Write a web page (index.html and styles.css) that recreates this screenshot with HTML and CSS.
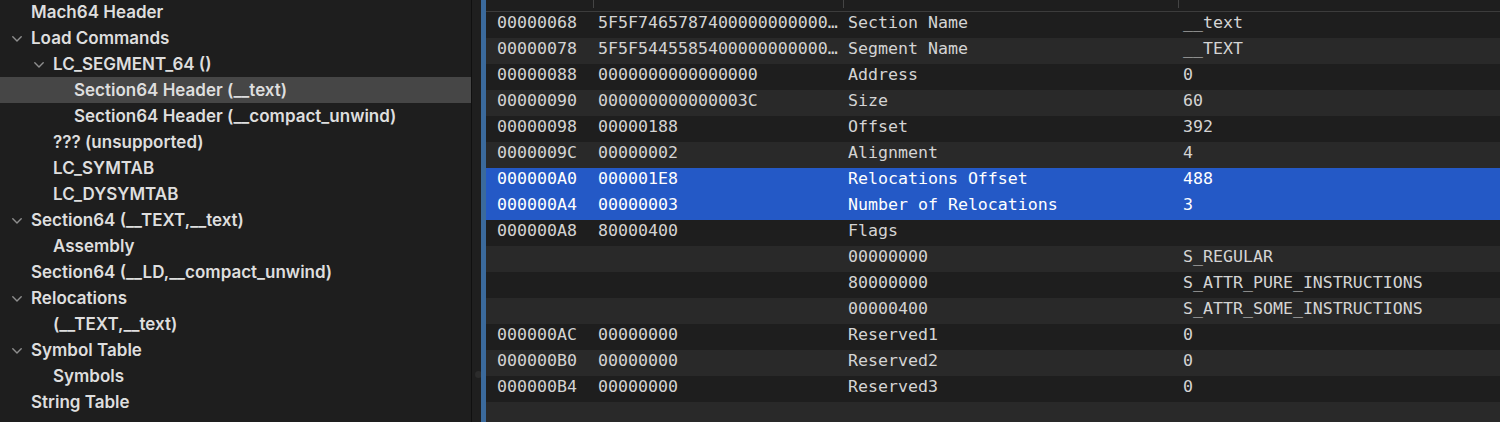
FILE: index.html
```html
<!DOCTYPE html>
<html>
<head>
<meta charset="utf-8">
<link rel="stylesheet" href="styles.css">
</head>
<body>
<div class="app">
  <div class="tree">
    <div class="node l0"><span class="label">Mach64 Header</span></div>
    <div class="node l0"><svg class="chev" viewBox="0 0 10 6"><polyline points="0.8,0.8 5,5 9.2,0.8"/></svg><span class="label">Load Commands</span></div>
    <div class="node l1"><svg class="chev" viewBox="0 0 10 6"><polyline points="0.8,0.8 5,5 9.2,0.8"/></svg><span class="label">LC_SEGMENT_64 ()</span></div>
    <div class="node l2 selected"><span class="label">Section64 Header (__text)</span></div>
    <div class="node l2"><span class="label">Section64 Header (__compact_unwind)</span></div>
    <div class="node l1"><span class="label">??? (unsupported)</span></div>
    <div class="node l1"><span class="label">LC_SYMTAB</span></div>
    <div class="node l1"><span class="label">LC_DYSYMTAB</span></div>
    <div class="node l0"><svg class="chev" viewBox="0 0 10 6"><polyline points="0.8,0.8 5,5 9.2,0.8"/></svg><span class="label">Section64 (__TEXT,__text)</span></div>
    <div class="node l1"><span class="label">Assembly</span></div>
    <div class="node l0"><span class="label">Section64 (__LD,__compact_unwind)</span></div>
    <div class="node l0"><svg class="chev" viewBox="0 0 10 6"><polyline points="0.8,0.8 5,5 9.2,0.8"/></svg><span class="label">Relocations</span></div>
    <div class="node l1"><span class="label">(__TEXT,__text)</span></div>
    <div class="node l0"><svg class="chev" viewBox="0 0 10 6"><polyline points="0.8,0.8 5,5 9.2,0.8"/></svg><span class="label">Symbol Table</span></div>
    <div class="node l1"><span class="label">Symbols</span></div>
    <div class="node l0"><span class="label">String Table</span></div>
  </div>
  <div class="splitter">
    <div class="knob"></div>
  </div>
  <div class="accent"></div>
  <div class="table">
    <div class="head">
      <div class="hc c1"></div>
      <div class="hc c2"></div>
      <div class="hc c3"></div>
      <div class="hc c4"></div>
    </div>
    <div class="row"><div class="c c1">00000068</div><div class="c c2">5F5F7465787400000000000…</div><div class="c c3">Section Name</div><div class="c c4">__text</div></div>
    <div class="row"><div class="c c1">00000078</div><div class="c c2">5F5F5445585400000000000…</div><div class="c c3">Segment Name</div><div class="c c4">__TEXT</div></div>
    <div class="row"><div class="c c1">00000088</div><div class="c c2">0000000000000000</div><div class="c c3">Address</div><div class="c c4">0</div></div>
    <div class="row"><div class="c c1">00000090</div><div class="c c2">000000000000003C</div><div class="c c3">Size</div><div class="c c4">60</div></div>
    <div class="row"><div class="c c1">00000098</div><div class="c c2">00000188</div><div class="c c3">Offset</div><div class="c c4">392</div></div>
    <div class="row"><div class="c c1">0000009C</div><div class="c c2">00000002</div><div class="c c3">Alignment</div><div class="c c4">4</div></div>
    <div class="row sel"><div class="c c1">000000A0</div><div class="c c2">000001E8</div><div class="c c3">Relocations Offset</div><div class="c c4">488</div></div>
    <div class="row sel"><div class="c c1">000000A4</div><div class="c c2">00000003</div><div class="c c3">Number of Relocations</div><div class="c c4">3</div></div>
    <div class="row"><div class="c c1">000000A8</div><div class="c c2">80000400</div><div class="c c3">Flags</div><div class="c c4"></div></div>
    <div class="row"><div class="c c1"></div><div class="c c2"></div><div class="c c3">00000000</div><div class="c c4">S_REGULAR</div></div>
    <div class="row"><div class="c c1"></div><div class="c c2"></div><div class="c c3">80000000</div><div class="c c4">S_ATTR_PURE_INSTRUCTIONS</div></div>
    <div class="row"><div class="c c1"></div><div class="c c2"></div><div class="c c3">00000400</div><div class="c c4">S_ATTR_SOME_INSTRUCTIONS</div></div>
    <div class="row"><div class="c c1">000000AC</div><div class="c c2">00000000</div><div class="c c3">Reserved1</div><div class="c c4">0</div></div>
    <div class="row"><div class="c c1">000000B0</div><div class="c c2">00000000</div><div class="c c3">Reserved2</div><div class="c c4">0</div></div>
    <div class="row"><div class="c c1">000000B4</div><div class="c c2">00000000</div><div class="c c3">Reserved3</div><div class="c c4">0</div></div>
    <div class="row"><div class="c c1"></div><div class="c c2"></div><div class="c c3"></div><div class="c c4"></div></div>
  </div>
</div>
</body>
</html>
```

FILE: styles.css
```css
html, body {
  margin: 0;
  padding: 0;
  background: #1e1e1e;
}

.app {
  display: flex;
  width: 1500px;
  height: 422px;
  overflow: hidden;
}

/* ---------- left outline ---------- */
.tree {
  width: 471px;
  flex: none;
  background: #1e1e1e;
  border-right: 1px solid #101010;
  margin-top: -1px;
  font-family: Inter, "Noto Sans", sans-serif;
  font-weight: 600;
  font-size: 17px;
  color: #dedede;
}

.node {
  height: 26px;
  display: flex;
  align-items: center;
  position: relative;
  white-space: nowrap;
}

.node.l0 { padding-left: 31px; }
.node.l1 { padding-left: 53px; }
.node.l2 { padding-left: 74px; }

.node.selected {
  background: #464646;
}

.chev {
  position: absolute;
  width: 10px;
  height: 6px;
  margin-left: -19px;
  top: 11px;
  fill: none;
  stroke: #8e8e8e;
  stroke-width: 1.4;
  stroke-linecap: round;
  stroke-linejoin: round;
}

/* ---------- splitter ---------- */
.splitter {
  width: 9px;
  flex: none;
  background: #1f1f1f;
  display: flex;
  flex-direction: column;
  align-items: center;
}

.knob {
  width: 7px;
  height: 7px;
  border-radius: 50%;
  background: #2c2c2c;
  margin-top: 371px;
  margin-left: 3px;
}

.accent {
  width: 5px;
  flex: none;
  background: #3b6a9c;
}

/* ---------- table ---------- */
.table {
  flex: 1;
  min-width: 0;
  font-family: "DejaVu Sans Mono", "Liberation Mono", monospace;
  font-size: 16.6px;
  color: #d4d4d4;
}

.head {
  display: flex;
  height: 11px;
  border-bottom: 1px solid #3c3c3c;
  background: #1e1e1e;
}

.hc {
  height: 8px;
  box-sizing: border-box;
}

.hc.c2, .hc.c3, .hc.c4 {
  border-left: 1px solid #444;
}

.row {
  display: flex;
  height: 26px;
  align-items: center;
  background: #1e1e1e;
}

.row:nth-child(odd) {
  background: #292929;
}

.row.sel {
  background: #2459c6;
  color: #ffffff;
}

.c {
  box-sizing: border-box;
  white-space: nowrap;
  overflow: hidden;
  padding-bottom: 5px;
}

.c1 { width: 107px; padding-left: 11px; flex: none; }
.c2 { width: 250px; padding-left: 5px; flex: none; }
.c3 { width: 335px; padding-left: 5px; flex: none; }
.c4 { flex: 1; padding-left: 5px; }
```
